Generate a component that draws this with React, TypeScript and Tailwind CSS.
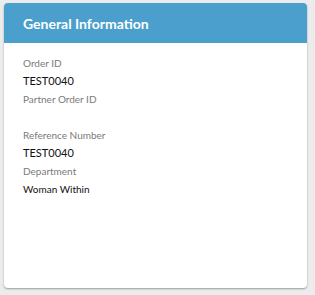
const fields = [
  { label: 'Order ID', value: 'TEST0040', big: true },
  { label: 'Partner Order ID', value: '' },
  { label: 'Reference Number', value: 'TEST0040', big: true },
  { label: 'Department', value: 'Woman Within' },
];

export default function App() {
  return (
    <div className="w-[315px] h-[295px] bg-[#ececec] pt-[3px] pl-[4px] font-['Lato','Liberation_Sans',sans-serif]">
      <div className="w-[303px] h-[285px] bg-white rounded-[4px] shadow-[0_1px_2px_rgba(0,0,0,0.35)] overflow-hidden">
        <div className="h-[40px] bg-[#4a9fcc] flex items-center px-[19px]">
          <h2 className="text-white font-bold text-[14px]">General Information</h2>
        </div>
        <div className="px-[19px] pt-[11px]">
          {fields.map((f) => (
            <div key={f.label}>
              <div className="h-[18px] leading-[18px] text-[10px] text-[#7a7a7a]">{f.label}</div>
              <div className={`h-[18px] leading-[18px] text-[#111] ${f.big ? 'text-[11px]' : 'text-[10px]'}`}>{f.value}</div>
            </div>
          ))}
        </div>
      </div>
    </div>
  );
}
